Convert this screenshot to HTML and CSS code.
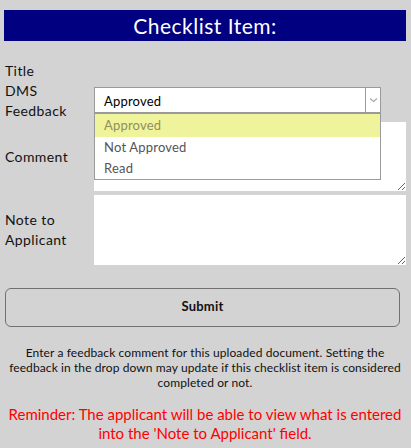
FILE: index.html
```html
<!DOCTYPE html>
<html>
<head>
<meta charset="utf-8">
<link rel="stylesheet" href="styles.css">
</head>
<body>
<div class="page">
  <h1 class="header">Checklist Item:</h1>
  <div class="form">
    <div class="row row-title">
      <div class="label">Title</div>
      <div class="value"></div>
    </div>
    <div class="row row-feedback">
      <div class="label">DMS<br>Feedback</div>
      <div class="value">
        <div class="select">
          <span class="select-text">Approved</span>
          <span class="select-arrow">
            <svg width="9" height="6" viewBox="0 0 9 6"><path d="M1 1.5 L4.5 4.5 L8 1.5" fill="none" stroke="#a8a8a8" stroke-width="1.2"/></svg>
          </span>
          <ul class="options">
            <li class="option selected">Approved</li>
            <li class="option">Not Approved</li>
            <li class="option">Read</li>
          </ul>
        </div>
      </div>
    </div>
    <div class="row row-comment">
      <div class="label">Comment</div>
      <div class="value"><textarea class="area area-comment"></textarea></div>
    </div>
    <div class="row row-note">
      <div class="label">Note to<br>Applicant</div>
      <div class="value"><textarea class="area area-note"></textarea></div>
    </div>
  </div>
  <button class="submit">Submit</button>
  <p class="info">Enter a feedback comment for this uploaded document. Setting the feedback in the drop down may update if this checklist item is considered completed or not.</p>
  <p class="reminder">Reminder: The applicant will be able to view what is entered into the 'Note to Applicant' field.</p>
</div>
</body>
</html>
```

FILE: styles.css
```css
html, body {
  margin: 0;
  padding: 0;
  background: #d3d3d3;
}
body {
  font-family: Lato, "Open Sans", sans-serif;
  color: #111;
}
.page {
  padding: 10px 5px 0 4px;
}
.header {
  margin: 0;
  height: 31px;
  line-height: 31px;
  background: #000080;
  color: #fff;
  text-align: center;
  font-size: 21px;
  letter-spacing: 0.5px;
  font-weight: normal;
}
.form {
  margin-top: 20px;
  display: flex;
  flex-direction: column;
}
.row {
  display: flex;
  align-items: center;
}
.label {
  width: 90px;
  flex: none;
  font-size: 14px;
  line-height: 20px;
  letter-spacing: 0.4px;
  padding-left: 1px;
  box-sizing: border-box;
}
.value {
  flex: 1;
  display: flex;
}
.row-title { height: 20px; }
.row-feedback { height: 40px; }
.row-feedback .value { align-self: flex-start; }
.row-comment { margin-top: 1px; }
.row-note { margin-top: 4px; }

.select {
  position: relative;
  width: 287px;
  height: 26px;
  box-sizing: border-box;
  border: 1px solid #9a9a9a;
  background: #fff;
  display: flex;
  align-items: center;
  margin-top: 6px;
}
.select-text {
  flex: 1;
  padding: 2px 0 0 9px;
  font-size: 13px;
  letter-spacing: 0.2px;
  color: #000;
}
.select-arrow {
  width: 14px;
  height: 100%;
  border-left: 1px solid #9a9a9a;
  display: flex;
  align-items: center;
  justify-content: center;
}
.options {
  position: absolute;
  left: -1px;
  top: 25px;
  width: 287px;
  box-sizing: border-box;
  margin: 0;
  padding: 0;
  list-style: none;
  background: #fff;
  border: 1px solid #9a9a9a;
  z-index: 2;
}
.option {
  height: 21px;
  line-height: 21px;
  padding-left: 9px;
  font-size: 13px;
  letter-spacing: 0.2px;
  color: #555;
}
.option.selected {
  background: #eff49c;
  color: #8f8f5a;
  height: 23px;
  line-height: 23px;
}
.area {
  display: block;
  width: 312px;
  box-sizing: border-box;
  border: 0;
  background: #fff;
  margin: 0;
  resize: vertical;
}
.area-comment { height: 69px; }
.area-note { height: 70px; }

.submit {
  display: block;
  margin: 23px 0 0 1px;
  width: 395px;
  height: 39px;
  box-sizing: border-box;
  border: 1px solid #707070;
  border-radius: 6px;
  background: #d3d3d3;
  padding: 0 0 3px;
  font-family: Lato, "Open Sans", sans-serif;
  font-weight: bold;
  font-size: 13px;
  letter-spacing: 0.2px;
  color: #111;
}
.info {
  margin: 18px 0 0;
  text-align: center;
  font-size: 12px;
  line-height: 15px;
  letter-spacing: 0.1px;
}
.reminder {
  margin: 15px 0 0;
  text-align: center;
  font-size: 15px;
  line-height: 19px;
  color: #ff0000;
}
```
